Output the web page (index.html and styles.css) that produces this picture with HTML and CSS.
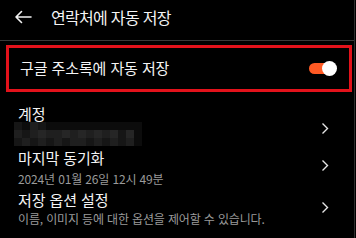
FILE: index.html
```html
<!DOCTYPE html>
<html lang="ko">
<head>
  <meta charset="UTF-8" />
  <meta name="viewport" content="width=device-width, initial-scale=1.0"/>
  <title>연락처에 자동 저장</title>
  <link rel="stylesheet" href="styles.css">
</head>
<body>

<div class="screen">
  <header class="appbar">
    <svg class="back" width="18" height="14" viewBox="0 0 18 14">
      <path d="M17 7H2M7.5 1.5L2 7l5.5 5.5" fill="none" stroke="#f2f2f2" stroke-width="1.6" stroke-linecap="round" stroke-linejoin="round"/>
    </svg>
    <div class="title">연락처에 자동 저장</div>
  </header>

  <div class="highlight">
    <div class="switch-row">
      <span class="label">구글 주소록에 자동 저장</span>
      <span class="toggle"><span class="track"></span><span class="thumb"></span></span>
    </div>
  </div>

  <div class="row row-account">
    <div class="text">
      <div class="label">계정</div>
      <div class="mosaic">
        <span class="m2"></span><span class="m1"></span><span class="m3"></span><span class="m2"></span><span class="m1"></span><span class="m1"></span><span class="m1"></span><span class="m1"></span><span class="m1"></span><span class="m1"></span><span class="m1"></span><span class="m1"></span><span class="m1"></span><span class="m1"></span><span class="m1"></span><span class="m1"></span>
        <span class="m3"></span><span class="m2"></span><span class="m3"></span><span class="m4"></span><span class="m3"></span><span class="m3"></span><span class="m4"></span><span class="m3"></span><span class="m4"></span><span class="m3"></span><span class="m4"></span><span class="m3"></span><span class="m4"></span><span class="m2"></span><span class="m4"></span><span class="m1"></span>
        <span class="m2"></span><span class="m3"></span><span class="m2"></span><span class="m3"></span><span class="m2"></span><span class="m3"></span><span class="m2"></span><span class="m3"></span><span class="m3"></span><span class="m2"></span><span class="m3"></span><span class="m2"></span><span class="m3"></span><span class="m2"></span><span class="m3"></span><span class="m1"></span>
      </div>
    </div>
    <svg class="chev" width="8" height="13" viewBox="0 0 8 13"><path d="M1.5 1.5l5 5-5 5" fill="none" stroke="#e6e6e6" stroke-width="1.4"/></svg>
  </div>

  <div class="row row-sync">
    <div class="text">
      <div class="label">마지막 동기화</div>
      <div class="sub">2024년 01월 26일 12시 49분</div>
    </div>
    <svg class="chev" width="8" height="13" viewBox="0 0 8 13"><path d="M1.5 1.5l5 5-5 5" fill="none" stroke="#e6e6e6" stroke-width="1.4"/></svg>
  </div>

  <div class="row row-options">
    <div class="text">
      <div class="label">저장 옵션 설정</div>
      <div class="sub">이름, 이미지 등에 대한 옵션을 제어할 수 있습니다.</div>
    </div>
    <svg class="chev" width="8" height="13" viewBox="0 0 8 13"><path d="M1.5 1.5l5 5-5 5" fill="none" stroke="#e6e6e6" stroke-width="1.4"/></svg>
  </div>
</div>

</body>
</html>
```

FILE: styles.css
```css
html, body {
  margin: 0;
  background: #000;
}
body {
  font-family: "Noto Sans CJK KR", "Noto Sans", sans-serif;
  color: #f4f4f4;
}
.screen {
  width: 354px;
  height: 238px;
  border-right: 1px solid #2e2e2e;
  overflow: hidden;
}
.appbar {
  height: 41px;
  display: flex;
  align-items: center;
  border-bottom: 1px solid #3a3a3a;
  box-sizing: border-box;
  padding-left: 14px;
}
.back {
  margin-top: -6px;
}
.title {
  margin-left: 19px;
  margin-top: -6px;
  font-size: 16px;
  letter-spacing: -0.7px;
}
.highlight {
  margin: 4px 2px 0 6px;
  border: 3px solid #e3121b;
  height: 41px;
}
.switch-row {
  height: 100%;
  display: flex;
  align-items: center;
  justify-content: space-between;
  padding: 0 12px 0 11px;
}
.switch-row .label {
  font-size: 15px;
  letter-spacing: -0.1px;
  margin-top: -1px;
}
.toggle {
  position: relative;
  width: 28px;
  height: 15px;
}
.track {
  position: absolute;
  left: 0;
  top: 2px;
  width: 24px;
  height: 11px;
  border-radius: 6px;
  background: #ff5a24;
}
.thumb {
  position: absolute;
  right: 0;
  top: 0;
  width: 15px;
  height: 15px;
  border-radius: 50%;
  background: #fff;
}
.row {
  display: flex;
  align-items: center;
  justify-content: space-between;
  padding: 0 25px 0 18px;
}
.label {
  font-size: 15px;
  letter-spacing: -0.1px;
  line-height: 20px;
}
.sub {
  font-size: 12px;
  letter-spacing: -0.15px;
  line-height: 18px;
  color: #9a9a9a;
}
.row-account {
  height: 56px;
  padding-top: 11px;
  box-sizing: border-box;
}
.row-account .label {
  line-height: 18px;
}
.row-account .chev {
  margin-top: 6px;
}
.mosaic {
  display: grid;
  grid-template-columns: repeat(16, 8px);
  grid-auto-rows: 8px;
  margin: -1px 0 0 -4px;
}
.m1 { background: #0c0c0c; }
.m2 { background: #161616; }
.m3 { background: #1f1f1f; }
.m4 { background: #262626; }
.row-sync {
  height: 40px;
}
.row-sync .sub {
  margin-top: 2px;
}
.row-sync .chev {
  margin-bottom: 6px;
}
.row-options {
  height: 42px;
}
.row-options .chev {
  margin-bottom: 4px;
}
```
